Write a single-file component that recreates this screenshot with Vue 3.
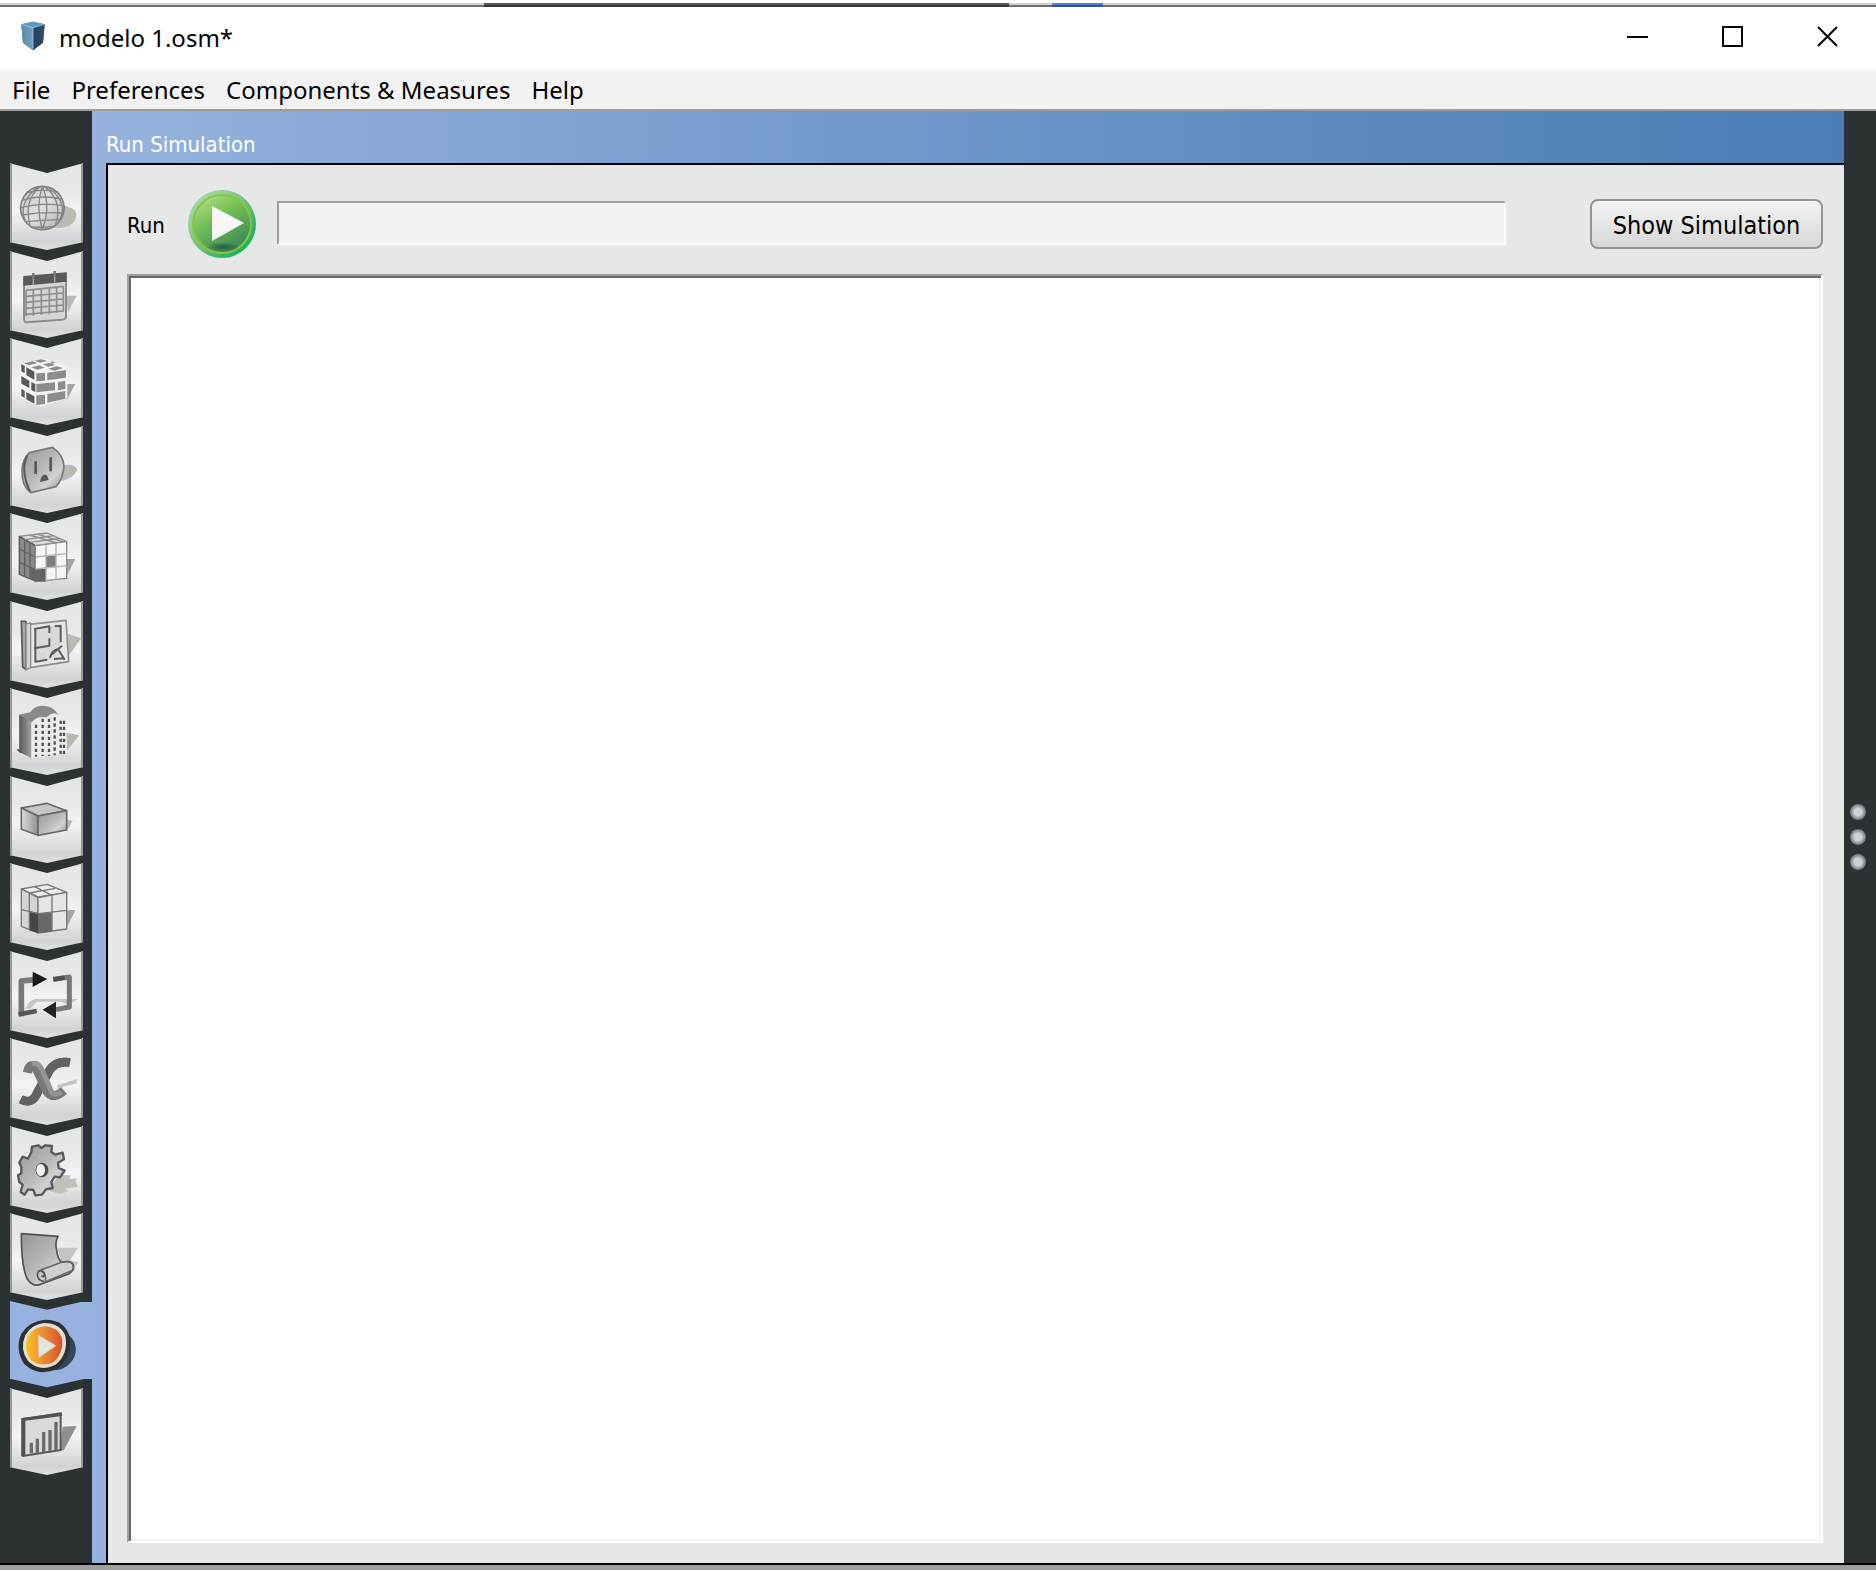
<script setup>
import { ref } from 'vue'

const menus = ['File', 'Preferences', 'Components & Measures', 'Help']
const active = ref('Run Simulation')

const D = '#58595a'
const G = '#8c8d8d'
const L = '#d9dadb'
const S = '#b9bbb2'

// Every shape is [path, fill, stroke, stroke width] on a 219 x 264 grid.
const tabs = [
  {
    name: 'Site',
    shapes: [
      ['M160 128Q200 134 199 158Q196 186 160 194Q140 196 120 192Z', S],
      ['M97 70a65 65 0 1 0 .1 0Z', 'url(#metal)', '#7f8080', 5],
      ['M31 134Q97 116 163 128M36 112Q90 94 157 108M50 90Q95 74 144 88M34 156Q100 146 160 150M44 176Q100 172 150 170M62 192Q100 194 130 190M97 70Q76 130 97 199M97 70Q124 132 97 199M92 70Q40 110 60 186M102 70Q160 110 137 184M84 72Q22 120 46 174M114 72Q176 120 150 168', 'none', '#858686', 4]
    ]
  },
  {
    name: 'Schedules',
    shapes: [
      ['M168 134L200 134L174 184Z', S],
      ['M42 82L168 68L168 196Q168 206 156 206L52 214Q42 215 42 202Z', '#d4d5d5', G, 6],
      ['M40 75L170 64L170 92L40 104Z', D],
      ['M70 66V84M134 60V80', 'none', '#77787a', 8],
      ['M70 84V102M134 78V94', 'none', '#a9aaaa', 4],
      ['M48 118L160 106M48 136L160 126M48 154L160 144M48 172L160 162M48 190L160 180M48 118V196M70 116V194M94 114V192M118 112V190M140 110V186M160 106V182', 'none', G, 5]
    ]
  },
  {
    name: 'Constructions',
    shapes: [
      ['M166 138L196 138L170 186Z', '#a5a6a0'],
      ['M28 80L104 62L172 86V180L90 206L30 176Z', '#f4f4f4'],
      ['M34 78l10 6v22l-10-6ZM49 88l24 13v24l-24-13ZM34 114l24 14v22l-24-13ZM64 132l12 6v24l-12-6ZM34 152l10 6v22l-10-6ZM49 162l24 13v22l-24-13Z', D],
      ['M79 106l26-2v24l-26 2ZM112 104l56-8v23l-56 8ZM79 138l56-5v24l-56 6ZM144 132l22-3v24l-22 4ZM79 172l26-2v28l-26 3ZM112 168l54-9v23l-54 12Z', G],
      ['M42 76l26-6 14 6-26 6ZM74 68l20-4 18 5-22 5ZM64 88l24-6 16 7-22 6ZM98 79l22-5 16 7-22 5ZM114 92l26-7 20 5-26 8ZM122 70l14 3-10 4Z', G]
    ]
  },
  {
    name: 'Loads',
    shapes: [
      ['M160 118Q196 112 202 132Q190 158 150 166Z', S],
      ['M58 80L128 64Q160 86 162 122Q158 160 138 182L62 200Q34 178 36 132Q38 100 58 80Z', 'url(#metalDark)', '#77787a', 5],
      ['M52 88Q30 132 60 196', 'none', D, 6],
      ['M77 106V144M122 94V136', 'none', D, 8],
      ['M90 168Q92 150 102 146Q112 144 116 162Z', D]
    ]
  },
  {
    name: 'Space Types',
    shapes: [
      ['M166 138L196 138L170 190Z', '#a5a6a0'],
      ['M28 70L112 60L170 86L76 98Z', '#dcdddd', G, 4],
      ['M28 70L76 98V204L28 184Z', '#88898a', D, 4],
      ['M76 98L170 86V196L76 206Z', '#f6f6f6', G, 4],
      ['M108 130L138 128V162L108 166Z', '#7c7d7d'],
      ['M62 168L108 168V206L76 205L62 198Z', '#626364'],
      ['M28 108L76 132M28 148L76 170M44 78V192M60 88V196', 'none', '#5f6061', 4],
      ['M76 132L170 122M76 168L170 158M108 96V204M138 92V202', 'none', '#b2b3b3', 4],
      ['M58 66L140 90M84 64L158 86M44 80L132 68M60 88L150 76', 'none', G, 4]
    ]
  },
  {
    name: 'Geometry',
    shapes: [
      ['M174 98L214 112L176 164Z', S],
      ['M58 70L168 58L176 182L60 200Z', '#e6e7e7', '#8f9090', 5],
      ['M34 60L48 62V206L38 198Z', '#a4a5a5', D, 5],
      ['M48 68L62 66V200L48 206Z', '#d0d1d1', G, 4],
      ['M72 84L152 72V158L124 178L76 182Z', '#d9dada'],
      ['M72 84L118 76V96M134 76L152 74V124M72 142L118 134V112M76 86V182L112 176M120 170Q126 148 144 144L164 176M126 160L156 134M132 174L160 172', 'none', '#5c5d5d', 6]
    ]
  },
  {
    name: 'Facility',
    shapes: [
      ['M168 134L208 142L170 190Z', S],
      ['M28 80L62 72Q76 50 104 54Q132 56 146 82L64 104V210L28 188Z', '#88898a'],
      ['M28 80L64 102V210L28 192Z', 'url(#side)'],
      ['M64 104Q80 82 110 88Q134 64 150 86L170 92V196L64 210Z', '#ececec'],
      ['M78 110V206M98 92V204M117 92V204M134 88V202M152 98V200M162 98V200', 'none', '#505152', 7, '10 8'],
      ['M22 184L34 194', 'none', '#455564', 5]
    ]
  },
  {
    name: 'Spaces',
    shapes: [
      ['M168 130L188 134L170 166Z', S],
      ['M34 96L110 82L170 104L84 120Z', '#c4c5c5', '#68696a', 5],
      ['M34 96L84 120V178L34 160Z', 'url(#side2)', '#68696a', 5],
      ['M84 120L170 104V162L84 178Z', 'url(#metalDark)', '#68696a', 5]
    ]
  },
  {
    name: 'Thermal Zones',
    shapes: [
      ['M166 140L196 142L170 194Z', '#a5a6a0'],
      ['M34 78L112 64L170 88L86 102Z', '#eeeeee', '#77787a', 4],
      ['M34 78L84 104V210L34 190Z', '#d3d4d4', '#77787a', 4],
      ['M84 104L170 88V198L84 210Z', '#e5e5e5', '#77787a', 4],
      ['M58 144L84 150V210L58 202Z', '#434445'],
      ['M84 152L126 148V206L84 210Z', '#67686a'],
      ['M34 140L84 152L170 142M126 98V206M58 92V200M72 70L128 98M58 90L136 76', 'none', '#77787a', 4]
    ]
  },
  {
    name: 'HVAC Systems',
    shapes: [
      ['M48 172Q56 146 78 144H204L176 162L152 152H80L60 174Z', '#c5c6c0'],
      ['M34 196V90L76 86', 'none', '#77787a', 17],
      ['M26 190L80 180', 'none', D, 14],
      ['M68 62L112 84L68 108Z', '#191a1b'],
      ['M130 85L178 78V168L138 176', 'none', '#77787a', 15],
      ['M130 86L164 80', 'none', '#505152', 13],
      ['M138 152L98 176L138 202Z', '#222324']
    ]
  },
  {
    name: 'Output Variables',
    shapes: [
      ['M142 142L200 124V136L160 146L144 158Z', '#c2c3c0'],
      ['M32 184Q66 202 82 164L118 98Q138 66 180 74', 'none', '#616263', 27],
      ['M52 104Q60 68 80 94L112 162Q130 186 162 158', 'none', '#77787a', 27],
      ['M66 78Q86 70 98 100L126 164Q136 176 154 162', 'none', '#939494', 15]
    ]
  },
  {
    name: 'Simulation Settings',
    shapes: [
      ['M148 148H182L178 158L202 158L196 166L204 182L164 188L176 196L150 204L110 192Z', '#c0c1b8'],
      ['M64 78L66 62L86 58L94 66L106 58L126 60L124 78L136 86L158 80L162 100L144 110L146 126L164 134L150 154L134 152L124 168L128 186L108 190L96 206L76 208L70 192L54 190L44 206L32 198L38 176L28 168L24 148L34 142V124L28 110L38 92L54 98Z', 'url(#metalDark)', D, 7],
      ['M96 110a19 22 0 1 0 .1 0Z', '#4c4d4e'],
      ['M92 114a13 18 0 1 0 .1 0Z', '#f2f2f2']
    ]
  },
  {
    name: 'Measures',
    shapes: [
      ['M142 104L204 104L180 142L206 148L194 162L154 148Z', '#c3c4c0'],
      ['M34 62Q90 66 144 70Q134 86 140 112Q142 134 154 148L174 146Q194 148 190 170L178 182L96 212Q70 226 52 198Q34 164 34 62Z', 'url(#metalDark)', '#505152', 5],
      ['M94 170Q120 162 154 148L174 146Q194 148 188 172L106 206Q110 182 94 170Z', '#cfd0d0', '#68696a', 5],
      ['M102 206Q82 202 82 184Q86 164 102 180Q106 196 94 188', 'none', '#505152', 5]
    ]
  },
  {
    name: 'Run Simulation',
    shapes: [
      ['M176 102Q206 126 194 166Q174 208 130 208L112 200Z', '#35455c'],
      ['M104 56Q164 54 180 110Q186 170 140 204Q86 230 42 188Q14 144 34 98Q58 60 104 56Z', '#2c3134'],
      ['M102 66Q150 66 166 104Q176 158 138 190Q92 216 54 180Q28 144 46 102Q66 70 102 66Z', '#e5dfd2'],
      ['M104 76Q144 78 156 112Q162 156 132 182Q94 202 62 176Q38 144 54 106Q72 78 104 76Z', 'url(#ember)'],
      ['M84 102L138 134L86 170Z', '#e4e4df', '#cfc3ab', 2]
    ]
  },
  {
    name: 'Results Summary',
    shapes: [
      ['M158 116L200 114L162 186L150 190Z', '#8f9090'],
      ['M38 94L152 76V186L38 204Z', L, D, 6],
      ['M34 90L156 74V84L46 98V204H34Z', '#505152'],
      ['M64 164V196M82 152V194M101 132V192M120 126V188M138 102V186', 'none', '#6a6b6c', 10]
    ]
  }
]
</script>

<template>
  <div class="window">
    <div class="edge"><i class="edge-dark"></i><i class="edge-blue"></i></div>

    <header class="titlebar">
      <svg class="logo" width="30" height="36" viewBox="0 0 30 36" aria-hidden="true">
        <path d="M1 4L15 1L29 4L27 26L15 35L3 26Z" fill="#315475" />
        <path d="M1 4L15 8V35L3 26Z" fill="url(#logoSide)" />
        <path d="M29 4L15 8V35L27 26Z" fill="url(#logoDark)" />
        <path d="M1 4L15 1L29 4L15 8Z" fill="#5b9bc6" />
        <path d="M1 4L15 8L29 4M15 8V33" fill="none" stroke="#a5c4d6" />
      </svg>
      <h1 class="title">modelo 1.osm*</h1>
      <div class="controls">
        <button type="button" aria-label="Minimize">
          <svg width="21" height="21" viewBox="0 0 21 21"><path d="M0 11H21" /></svg>
        </button>
        <button type="button" aria-label="Maximize">
          <svg width="21" height="21" viewBox="0 0 21 21"><path d="M1 1H20V20H1Z" /></svg>
        </button>
        <button type="button" aria-label="Close">
          <svg width="21" height="21" viewBox="0 0 21 21"><path d="M1 1L20 20M20 1L1 20" /></svg>
        </button>
      </div>
    </header>

    <nav class="menubar">
      <button v-for="m in menus" :key="m" type="button">{{ m }}</button>
    </nav>

    <div class="body">
      <nav class="tabs">
        <button
          v-for="t in tabs"
          :key="t.name"
          type="button"
          class="tab"
          :aria-label="t.name"
          @click="active = t.name"
        >
          <svg width="82" height="88" viewBox="0 0 246 264">
            <path v-if="t.name === active" d="M0 0L111 26L212 3H246V234H222L111 259L0 233Z" fill="#97b2de" />
            <template v-else>
              <path d="M0 1L111 30L219 1V238L111 261L0 238Z" fill="url(#plate)" />
              <path d="M3 2V238M216 2V238" stroke="#959999" stroke-width="6" />
            </template>
            <path
              v-for="(s, i) in t.shapes"
              :key="i"
              :d="s[0]"
              :fill="s[1]"
              :stroke="s[2] || 'none'"
              :stroke-width="s[3]"
              :stroke-dasharray="s[4]"
              stroke-linejoin="round"
            />
          </svg>
        </button>
      </nav>

      <main class="main">
        <h2 class="heading">Run Simulation</h2>
        <section class="panel">
          <div class="toolbar">
            <label class="run-label" for="run">Run</label>
            <button id="run" type="button" class="run">
              <svg width="70" height="70" viewBox="0 0 70 70" aria-hidden="true">
                <circle cx="35" cy="35" r="34" fill="url(#ring)" />
                <circle cx="35" cy="35" r="29" fill="url(#ball)" stroke="#89c53f" stroke-width="2" />
                <ellipse cx="36" cy="58" rx="17" ry="5" fill="url(#shade)" />
                <path d="M25 17L57 34L25 52Z" fill="#f5f6f5" />
              </svg>
            </button>
            <div class="progress" role="progressbar" aria-label="Simulation progress"></div>
            <button type="button" class="show">Show Simulation</button>
          </div>
          <textarea class="log" readonly aria-label="Simulation output"></textarea>
        </section>
      </main>

      <button type="button" class="grip" aria-label="Open right panel">
        <i></i><i></i><i></i>
      </button>
    </div>

    <footer class="bottom"></footer>

    <svg class="defs" width="0" height="0" aria-hidden="true">
      <defs>
        <linearGradient id="plate" x2="0" y2="1">
          <stop offset="0" stop-color="#e4e5e6" />
          <stop offset=".3" stop-color="#e7e8e9" />
          <stop offset=".55" stop-color="#f3f4f5" />
          <stop offset=".9" stop-color="#d1d2d5" />
          <stop offset="1" stop-color="#e0e1e2" />
        </linearGradient>
        <linearGradient id="metal" y2="1">
          <stop offset="0" stop-color="#c9caca" />
          <stop offset=".5" stop-color="#dedfdf" />
          <stop offset="1" stop-color="#aeafaf" />
        </linearGradient>
        <linearGradient id="metalDark" y2="1">
          <stop offset="0" stop-color="#969797" />
          <stop offset=".45" stop-color="#b5b6b6" />
          <stop offset=".7" stop-color="#d0d1d1" />
          <stop offset="1" stop-color="#929393" />
        </linearGradient>
        <linearGradient id="side">
          <stop offset="0" stop-color="#57595b" />
          <stop offset="1" stop-color="#9fa0a1" />
        </linearGradient>
        <linearGradient id="side2">
          <stop offset="0" stop-color="#dadbdb" />
          <stop offset="1" stop-color="#8e8f8f" />
        </linearGradient>
        <linearGradient id="ember">
          <stop offset="0" stop-color="#fcc21f" />
          <stop offset=".5" stop-color="#e88a35" />
          <stop offset="1" stop-color="#d8502a" />
        </linearGradient>
        <linearGradient id="ring" y2="1">
          <stop offset="0" stop-color="#b9dfb0" />
          <stop offset=".5" stop-color="#74c17a" />
          <stop offset=".8" stop-color="#25b35c" />
          <stop offset="1" stop-color="#25b35c" />
        </linearGradient>
        <linearGradient id="ball" x2=".6" y2="1">
          <stop offset="0" stop-color="#c5e19c" />
          <stop offset=".45" stop-color="#74c152" />
          <stop offset="1" stop-color="#3f8a5a" />
        </linearGradient>
        <radialGradient id="shade">
          <stop offset="0" stop-color="#1f5a3e" />
          <stop offset="1" stop-color="#1f5a3e" stop-opacity="0" />
        </radialGradient>
        <linearGradient id="logoSide">
          <stop offset="0" stop-color="#5d8aa8" />
          <stop offset="1" stop-color="#6fa3c0" />
        </linearGradient>
        <linearGradient id="logoDark">
          <stop offset="0" stop-color="#24435f" />
          <stop offset="1" stop-color="#2f4c6b" />
        </linearGradient>
      </defs>
    </svg>
  </div>
</template>

<style>
body {
  margin: 0;
}
</style>

<style scoped>
.window {
  display: flex;
  flex-direction: column;
  min-height: 100vh;
  background: #fff;
  color: #000;
  font-family: "Noto Sans", "Open Sans", sans-serif;
  font-size: 24px;
}
button {
  margin: 0;
  padding: 0;
  border: 0;
  background: none;
  color: inherit;
  font: inherit;
}
svg {
  display: block;
}
.defs {
  position: absolute;
}
.edge {
  display: flex;
  height: 4px;
  margin-top: 3px;
  background: linear-gradient(#d3d3d3 50%, #706f70 50%);
}
.edge-dark {
  width: 28%;
  margin-left: 25.8%;
  background: linear-gradient(#565656 50%, #393637 50%);
}
.edge-blue {
  width: 2.7%;
  margin-left: 2.3%;
  background: linear-gradient(#5182cc 50%, #35508a 50%);
}
.titlebar {
  display: flex;
  align-items: center;
  height: 63px;
  padding-left: 18px;
}
.logo {
  width: 30px;
  height: 30px;
  padding-bottom: 5px;
}
.title {
  flex: 1;
  margin: 0 0 0 11px;
  padding-bottom: 2px;
  font-size: 24px;
  font-weight: 400;
  line-height: 30px;
}
.controls {
  display: flex;
  padding: 0 1px 4px 0;
}
.controls button {
  display: flex;
  justify-content: center;
  width: 95px;
}
.controls path {
  fill: none;
  stroke: #000;
  stroke-width: 2px;
}
.menubar {
  display: flex;
  align-items: center;
  gap: 21px;
  height: 39px;
  padding-left: 12px;
  background: #f2f2f2;
  border-bottom: 2px solid #9d9d9c;
}
.menubar button {
  padding-bottom: 1px;
}
.body {
  display: flex;
  flex: 1;
  background: #2c3134;
}
.tabs {
  display: flex;
  flex-direction: column;
  justify-content: space-between;
  width: 82px;
  height: 1312px;
  padding: 52px 0 0 10px;
}
.tab {
  display: block;
  height: 87px;
}
.tab svg {
  overflow: visible;
}
.main {
  display: flex;
  flex: 1;
  flex-direction: column;
  padding-left: 14px;
  background: linear-gradient(90deg, #97b2de, #769bce 40%, #5d8bbf 70%, #4a7eb5);
}
.heading {
  height: 32px;
  margin: 0;
  padding-top: 20px;
  color: #fff;
  font: 400 22px/28px "DejaVu Sans Condensed", "DejaVu Sans", sans-serif;
}
.panel {
  display: flex;
  flex: 1;
  flex-direction: column;
  padding: 24px 21px 20px 19px;
  border: solid #000;
  border-width: 2px 0 0 2px;
  background: #e6e8e7;
}
.toolbar {
  display: flex;
  align-items: center;
  margin-bottom: 15px;
  font-family: "DejaVu Sans Condensed", "DejaVu Sans", sans-serif;
}
.run-label {
  width: 60px;
  padding-top: 3px;
  font-size: 22px;
}
.progress {
  flex: 1;
  height: 40px;
  margin: 0 84px 2px 20px;
  border: 2px solid;
  border-color: #a0a0a0 #fff #fff #a0a0a0;
  background: #f2f2f2;
}
.show {
  width: 233px;
  height: 50px;
  padding-top: 2px;
  border: 2px solid #939393;
  border-radius: 8px;
  background: linear-gradient(#f3f3f4, #d6d7d7);
  font-size: 25px;
}
.log {
  flex: 1;
  box-sizing: border-box;
  width: 100%;
  padding: 4px;
  border: 2px solid;
  border-color: #a0a0a0 #fff #fff #a0a0a0;
  outline: none;
  background: #fff;
  box-shadow: inset 2px 2px #696969, inset -2px -2px #f2f2f2;
  font: inherit;
  resize: none;
}
.grip {
  display: flex;
  flex-direction: column;
  align-items: center;
  justify-content: center;
  gap: 9px;
  width: 32px;
  padding-right: 4px;
}
.grip i {
  width: 16px;
  height: 16px;
  border-radius: 50%;
  background: radial-gradient(circle closest-side, #cdd2da 45%, #6d7174 100%);
}
.bottom {
  height: 5px;
  border-top: 2px solid #000;
  background: #a09e9e;
}
</style>
